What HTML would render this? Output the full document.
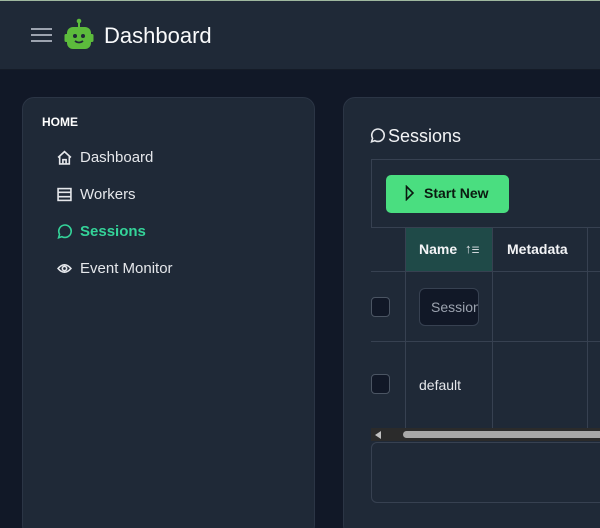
<!DOCTYPE html>
<html style="width:600px;height:528px;overflow:hidden"><head><style>
*{box-sizing:border-box;margin:0;padding:0}
body{width:600px;height:528px;overflow:hidden;background:#111827;font-family:"Liberation Sans",sans-serif;color:#e5e7eb;position:relative}
.hdr{position:absolute;left:0;top:0;width:600px;height:70px;background:#1f2937;border-top:1px solid #9fb89f;border-bottom:1px solid #151c28}
.abs{position:absolute}
.card{position:absolute;background:#1f2937;border:1px solid #2b3545;border-radius:12px}
.nav{position:absolute;left:57px;font-size:15px;color:#e5e7eb;display:flex;align-items:center;gap:8px}
.line{position:absolute;background:#374151}
</style></head><body>
<div class="hdr">
 <div class="abs" style="left:31px;top:27px;width:21px;height:2px;background:#9ca3af;box-shadow:0 6px 0 #9ca3af,0 12px 0 #9ca3af"></div>
 <svg class="abs" style="left:64px;top:17px" width="30" height="33" viewBox="0 0 30 33">
  <circle cx="15" cy="3" r="2.3" fill="#5cbb3c"/><rect x="14" y="3" width="2" height="6" fill="#5cbb3c"/>
  <rect x="3" y="9" width="24" height="22" rx="6" fill="#5cbb3c"/><rect x="0.5" y="16" width="4" height="8" rx="1.5" fill="#5cbb3c"/><rect x="25.5" y="16" width="4" height="8" rx="1.5" fill="#5cbb3c"/>
  <circle cx="11" cy="18" r="2" fill="#1f2937"/><circle cx="19" cy="18" r="2" fill="#1f2937"/>
  <path d="M11 23 Q15 26 19 23" stroke="#1f2937" stroke-width="1.8" fill="none"/>
 </svg>
 <div class="abs" style="left:104px;top:22px;font-size:22px;color:#f9fafb">Dashboard</div>
</div>
<div class="card" style="left:22px;top:97px;width:293px;height:440px"></div>
<div class="abs" style="left:42px;top:115px;font-size:12px;font-weight:bold;color:#fff">HOME</div>
<div class="nav" style="top:149px"><svg width="15" height="15" viewBox="0 0 14 14" fill="none" stroke="#e5e7eb" stroke-width="1.5"><path d="M1 7 L7 1.5 L13 7 M2.5 6 V13 H11.5 V6 M5.5 13 V9 H8.5 V13"/></svg>Dashboard</div>
<div class="nav" style="top:186px"><svg width="15" height="15" viewBox="0 0 14 14" fill="none" stroke="#e5e7eb" stroke-width="1.5"><rect x="1" y="1.5" width="12" height="11"/><path d="M1 5H13M1 9H13"/></svg>Workers</div>
<div class="nav" style="top:223px;color:#34d399;font-weight:bold"><svg width="15" height="15" viewBox="0 0 14 14" fill="none" stroke="#34d399" stroke-width="1.5"><path d="M1.5 12.8 L2.4 9.6 A5.8 5.8 0 1 1 4.6 11.8 Z"/></svg>Sessions</div>
<div class="nav" style="top:260px"><svg width="15" height="15" viewBox="0 0 14 14" fill="none" stroke="#e5e7eb" stroke-width="1.5"><path d="M1 7 Q7 0 13 7 Q7 14 1 7Z"/><circle cx="7" cy="7" r="2"/></svg>Event Monitor</div>

<div class="card" style="left:343px;top:97px;width:280px;height:440px"></div>
<svg class="abs" style="left:370px;top:128px" width="15" height="15" viewBox="0 0 14 14" fill="none" stroke="#e5e7eb" stroke-width="1.5"><path d="M1.5 12.8 L2.4 9.6 A5.8 5.8 0 1 1 4.6 11.8 Z"/></svg>
<div class="abs" style="left:388px;top:126px;font-size:18px;color:#f3f4f6">Sessions</div>
<div class="abs" style="left:371px;top:159px;width:240px;height:69px;border:1px solid #374151"></div>
<div class="abs" style="left:386px;top:175px;width:123px;height:38px;background:#4ade80;border-radius:5px;color:#0b1a10;font-weight:bold;font-size:14px;padding:10px 0 0 38px">Start New</div>
<svg class="abs" style="left:405px;top:185px" width="10" height="16" viewBox="0 0 10 16"><path d="M1.5 1.5 L8 8 L1.5 14.5Z" fill="none" stroke="#0b1a10" stroke-width="1.6"/></svg>
<div class="abs" style="left:405px;top:228px;width:87px;height:43px;background:#1f4a48"></div>
<div class="abs" style="left:419px;top:241px;font-size:14px;font-weight:bold;color:#f3f4f6">Name</div>
<div class="abs" style="left:465px;top:241px;font-size:13px;color:#e5e7eb">↑<span style="font-size:9px">☰</span></div>
<div class="abs" style="left:507px;top:241px;font-size:14px;font-weight:bold;color:#f3f4f6">Metadata</div>
<div class="line" style="left:371px;top:271px;width:240px;height:1px"></div>
<div class="line" style="left:371px;top:341px;width:240px;height:1px"></div>
<div class="line" style="left:405px;top:228px;width:1px;height:200px"></div>
<div class="line" style="left:492px;top:228px;width:1px;height:200px"></div>
<div class="line" style="left:587px;top:228px;width:1px;height:200px"></div>
<div class="abs" style="left:371px;top:297px;width:19px;height:20px;background:#111827;border:1px solid #4b5563;border-radius:4px"></div>
<div class="abs" style="left:371px;top:374px;width:19px;height:20px;background:#111827;border:1px solid #4b5563;border-radius:4px"></div>
<div class="abs" style="left:419px;top:288px;width:60px;height:38px;background:#111827;border:1px solid #374151;border-radius:6px;overflow:hidden;padding:10px 0 0 11px;font-size:14px;color:#9ca3af;white-space:nowrap">Session</div>
<div class="abs" style="left:419px;top:377px;font-size:14px;color:#e5e7eb">default</div>
<div class="abs" style="left:371px;top:428px;width:240px;height:13px;background:#2b2b2b"></div>
<div class="abs" style="left:375px;top:431px;width:0;height:0;border-top:4px solid transparent;border-bottom:4px solid transparent;border-right:6px solid #c0c0c0"></div>
<div class="abs" style="left:403px;top:431px;width:210px;height:7px;background:#a8a8a8;border-radius:4px"></div>
<div class="abs" style="left:371px;top:442px;width:240px;height:61px;border:1px solid #374151;border-radius:6px"></div>
</body></html>
